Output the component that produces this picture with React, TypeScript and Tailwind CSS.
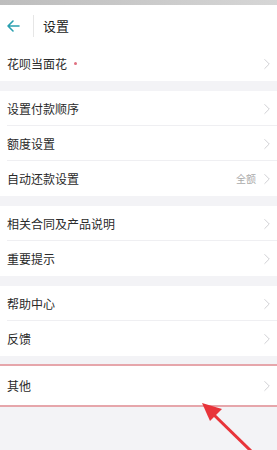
import { ChevronRight } from "lucide-react"

type Item = { label: string; dot?: boolean; value?: string }

const sections: Item[][] = [
  [{ label: "花呗当面花", dot: true }],
  [{ label: "设置付款顺序" }, { label: "额度设置" }, { label: "自动还款设置", value: "全额" }],
  [{ label: "相关合同及产品说明" }, { label: "重要提示" }],
  [{ label: "帮助中心" }, { label: "反馈" }],
]

function Row({ item, last }: { item: Item; last: boolean }) {
  return (
    <div className="relative flex h-[35px] items-center pl-[7px] pr-[1px]">
      <span className="text-[12px] text-[#2a2a2a]">{item.label}</span>
      {item.dot && <span className="ml-[7px] h-[3px] w-[3px] rounded-full bg-[#e07080]" />}
      <span className="flex-1" />
      {item.value && <span className="mr-[2px] text-[10px] text-[#aaa]">{item.value}</span>}
      <ChevronRight className="h-[18px] w-[18px] text-[#cbcbcf]" strokeWidth={1.2} />
      {!last && <div className="absolute bottom-0 left-[7px] right-0 h-px bg-[#efeff2]" />}
    </div>
  )
}

export default function App() {
  return (
    <div
      className="relative h-[450px] w-[277px] overflow-hidden bg-[#f3f3f6]"
      style={{ fontFamily: '"Noto Sans CJK SC", "Noto Sans", sans-serif' }}
    >
      <div className="h-[5px] bg-gradient-to-r from-[#bdbdbd] to-[#d6d6d6]" />
      <div className="flex h-[41px] items-center bg-white">
        <svg className="ml-[6px] h-[14px] w-[14px]" viewBox="0 0 14 14" fill="none">
          <path d="M13 7H2M7 2L2 7l5 5" stroke="#2aa0b0" strokeWidth="1.6" strokeLinecap="round" strokeLinejoin="round" />
        </svg>
        <div className="ml-[13px] h-[22px] w-px bg-[#e6e6e6]" />
        <span className="ml-[9px] text-[13px] text-[#222]">设置</span>
      </div>
      <div className="flex flex-col gap-[10px]">
        {sections.map((sec, i) => (
          <div key={i} className="bg-white">
            {sec.map((item, j) => (
              <Row key={item.label} item={item} last={j === sec.length - 1} />
            ))}
          </div>
        ))}
      </div>
      <div className="mt-[8px] border-y-2 border-[#e6a6ab] bg-white py-[2px]">
        <Row item={{ label: "其他" }} last />
      </div>
      <svg className="absolute left-0 top-0 h-[450px] w-[277px]" viewBox="0 0 277 450">
        <line x1="252" y1="452" x2="212" y2="413" stroke="#e8343a" strokeWidth="3" />
        <polygon points="202,403 222,409 210,421" fill="#e8343a" />
      </svg>
    </div>
  )
}
